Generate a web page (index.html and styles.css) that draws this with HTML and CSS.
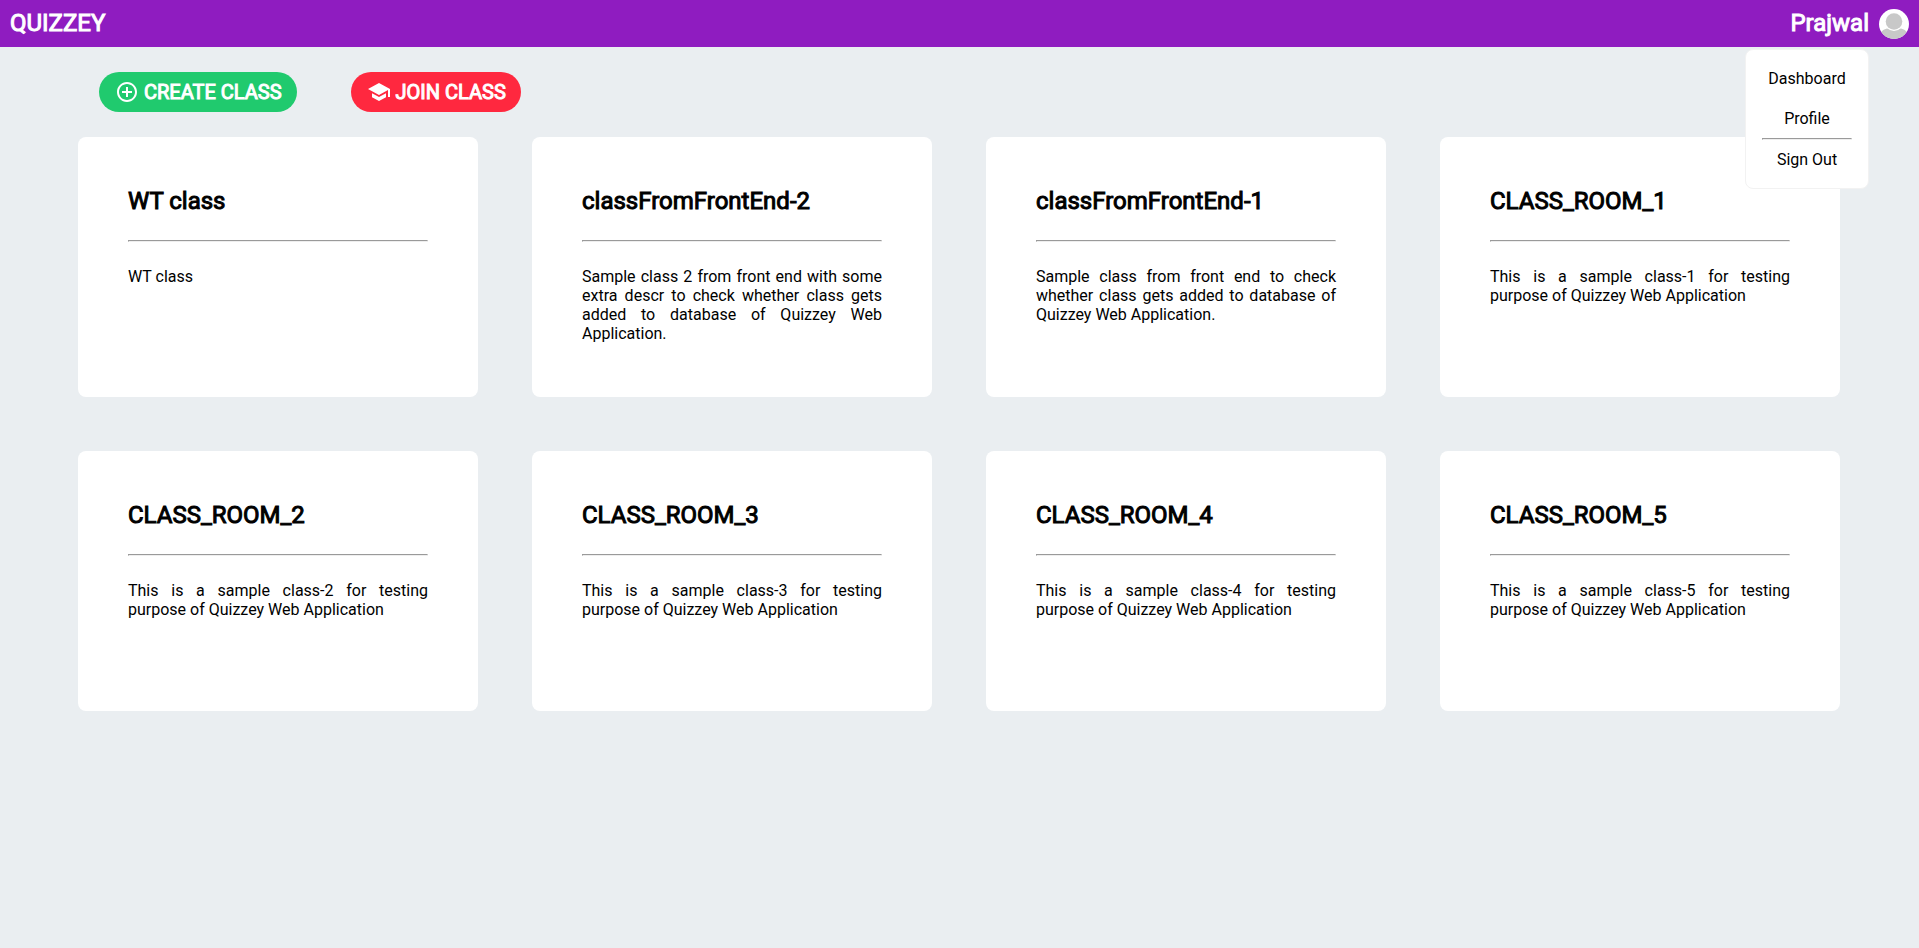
FILE: index.html
```html
<!DOCTYPE html>
<html lang="en">
<head>
<meta charset="utf-8">
<meta name="viewport" content="width=device-width, initial-scale=1">
<title>Quizzey</title>
<link rel="stylesheet" href="styles.css">
</head>
<body>
<header class="topbar">
  <h1 class="brand">QUIZZEY</h1>
  <div class="account">
    <span class="account-name">Prajwal</span>
    <button class="avatar" type="button" aria-label="Account menu">
      <svg viewBox="0 0 30 30" aria-hidden="true">
        <clipPath id="disc"><circle cx="15" cy="15" r="15"/></clipPath>
        <g clip-path="url(#disc)">
          <rect width="30" height="30" fill="#fff"/>
          <path d="M2 24C3 21.500 5 20.300 8 19.500H22C25 20.300 27 21.500 28 24V30H2Z" fill="#c8c8c8"/>
          <circle cx="15" cy="12" r="10" fill="#fff"/>
          <circle cx="15" cy="12.500" r="8.300" fill="#c8c8c8"/>
        </g>
      </svg>
    </button>
  </div>
  <nav class="menu">
    <a class="menu-link" href="#">Dashboard</a>
    <a class="menu-link" href="#">Profile</a>
    <hr class="menu-rule">
    <a class="menu-link" href="#">Sign Out</a>
  </nav>
</header>
<main>
  <div class="actions">
    <button class="action create" type="button">
      <svg class="icon" viewBox="0 0 24 24" aria-hidden="true"><path d="M13 7h-2v4H7v2h4v4h2v-4h4v-2h-4V7zm-1-5C6.480 2 2 6.480 2 12s4.480 10 10 10 10-4.480 10-10S17.520 2 12 2zm0 18c-4.410 0-8-3.590-8-8s3.590-8 8-8 8 3.590 8 8-3.590 8-8 8z"/></svg>
      CREATE CLASS
    </button>
    <button class="action join" type="button">
      <svg class="icon" viewBox="0 0 24 24" aria-hidden="true"><path d="M5 13.180v4L12 21l7-3.820v-4L12 17l-7-3.820zM12 3L1 9l11 6 9-4.910V17h2V9L12 3z"/></svg>
      JOIN CLASS
    </button>
  </div>
  <section class="classes">
    <article class="card"><h2 class="card-title">WT class</h2><hr class="card-rule"><p class="card-text">WT class</p></article>
    <article class="card"><h2 class="card-title">classFromFrontEnd-2</h2><hr class="card-rule"><p class="card-text">Sample class 2 from front end with some extra descr to check whether class gets added to database of Quizzey Web Application.</p></article>
    <article class="card"><h2 class="card-title">classFromFrontEnd-1</h2><hr class="card-rule"><p class="card-text">Sample class from front end to check whether class gets added to database of Quizzey Web Application.</p></article>
    <article class="card"><h2 class="card-title">CLASS_ROOM_1</h2><hr class="card-rule"><p class="card-text">This is a sample class-1 for testing purpose of Quizzey Web Application</p></article>
    <article class="card"><h2 class="card-title">CLASS_ROOM_2</h2><hr class="card-rule"><p class="card-text">This is a sample class-2 for testing purpose of Quizzey Web Application</p></article>
    <article class="card"><h2 class="card-title">CLASS_ROOM_3</h2><hr class="card-rule"><p class="card-text">This is a sample class-3 for testing purpose of Quizzey Web Application</p></article>
    <article class="card"><h2 class="card-title">CLASS_ROOM_4</h2><hr class="card-rule"><p class="card-text">This is a sample class-4 for testing purpose of Quizzey Web Application</p></article>
    <article class="card"><h2 class="card-title">CLASS_ROOM_5</h2><hr class="card-rule"><p class="card-text">This is a sample class-5 for testing purpose of Quizzey Web Application</p></article>
  </section>
</main>
</body>
</html>
```
FILE: styles.css
```css
* {
  box-sizing: border-box;
}

body {
  margin: 0;
  background: #eaeef1;
  color: #000;
  font: 16px/19px Roboto, sans-serif;
}

.topbar {
  position: relative;
  display: flex;
  align-items: flex-start;
  justify-content: space-between;
  padding: 9px 10px 8px;
  background: #8f1cc0;
  color: #fff;
}

.brand,
.account-name,
.card-title {
  margin: 0;
  font-size: 24px;
  font-weight: 400;
  line-height: 28px;
  -webkit-text-stroke: 1px currentColor;
}

.account {
  display: flex;
  align-items: flex-start;
  gap: 10px;
}

.avatar {
  width: 30px;
  height: 30px;
  padding: 0;
  border: 0;
  border-radius: 50%;
  background: none;
}

.avatar svg {
  display: block;
  width: 100%;
}

/* Account menu, hung below the top bar */
.menu {
  position: absolute;
  top: 49px;
  right: 50px;
  z-index: 1;
  padding: 9px 16px 8px;
  border: 1px solid #f2f2f2;
  border-radius: 8px;
  background: #fff;
  text-align: center;
}

.menu-link {
  display: block;
  min-width: 90px;
  padding: 10px 0;
  color: #000;
  line-height: 20px;
  text-decoration: none;
}

.menu-rule {
  margin: -1px 0 0;
}

.actions {
  display: flex;
  gap: 54px;
  padding: 25px 99px;
}

.action {
  display: flex;
  align-items: center;
  gap: 5px;
  height: 40px;
  padding: 0 15px 0 16px;
  border: 0;
  border-radius: 20px;
  color: #fff;
  font: 400 20px/24px Roboto, sans-serif;
  -webkit-text-stroke: 1px currentColor;
}

.create {
  background: #20ca6e;
}

.join {
  background: #ff283f;
}

.icon {
  width: 24px;
  height: 24px;
  fill: currentColor;
}

.classes {
  display: grid;
  grid-template-columns: repeat(4, 1fr);
  gap: 54px;
  padding: 0 79px 54px 78px;
}

.card {
  min-height: 260px;
  padding: 50px;
  border-radius: 8px;
  background: #fff;
}

.card-rule {
  margin: 25px 0;
}

.card-text {
  margin: 0;
  text-align: justify;
}
```
